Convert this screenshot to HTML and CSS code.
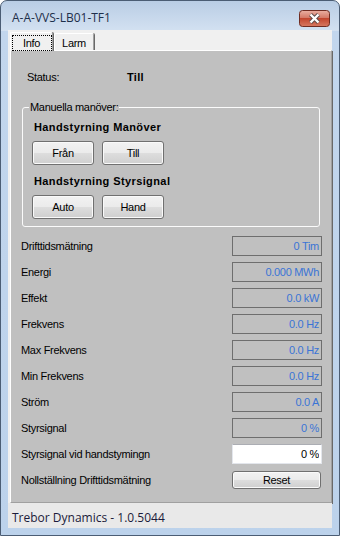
FILE: index.html
```html
<!DOCTYPE html>
<html lang="sv">
<head>
  <meta charset="UTF-8">
  <meta name="viewport" content="width=device-width, initial-scale=1.0">
  <title>A-A-VVS-LB01-TF1</title>
  <link rel="stylesheet" href="styles.css">
</head>
<body>
  <div class="window">
    <div class="titlebar">
      <span class="title">A-A-VVS-LB01-TF1</span>
      <span class="close-btn">
        <svg width="31" height="17" viewBox="0 0 31 17">
          <defs>
            <linearGradient id="closeGrad" x1="0" y1="0" x2="0" y2="1">
              <stop offset="0" stop-color="#eab0a3"/>
              <stop offset="0.45" stop-color="#d47a68"/>
              <stop offset="0.5" stop-color="#c2462f"/>
              <stop offset="1" stop-color="#d77a62"/>
            </linearGradient>
          </defs>
          <rect x="0.5" y="0.5" width="30" height="16" rx="3" fill="url(#closeGrad)" stroke="#6f2c22"/>
          <path d="M11.5 4.5 L19.5 12.5 M19.5 4.5 L11.5 12.5" stroke="#5a4a48" stroke-width="4.2"/>
          <path d="M11.5 4.5 L19.5 12.5 M19.5 4.5 L11.5 12.5" stroke="#ffffff" stroke-width="2.4"/>
        </svg>
      </span>
    </div>

    <div class="client">
      <div class="tabs">
        <div class="tab active"><span class="focus">Info</span></div>
        <div class="tab">Larm</div>
      </div>

      <div class="tabpage">
        <div class="status-row">
          <span class="status-label">Status:</span>
          <span class="status-value">Till</span>
        </div>

        <fieldset class="group">
          <legend>Manuella manöver:</legend>
          <div class="group-title">Handstyrning Manöver</div>
          <div class="btn-row">
            <button class="btn">Från</button>
            <button class="btn">Till</button>
          </div>
          <div class="group-title second">Handstyrning Styrsignal</div>
          <div class="btn-row">
            <button class="btn">Auto</button>
            <button class="btn">Hand</button>
          </div>
        </fieldset>

        <div class="rows">
          <div class="row"><span>Drifttidsmätning</span><span class="value">0 Tim</span></div>
          <div class="row"><span>Energi</span><span class="value">0.000 MWh</span></div>
          <div class="row"><span>Effekt</span><span class="value">0.0 kW</span></div>
          <div class="row"><span>Frekvens</span><span class="value">0.0 Hz</span></div>
          <div class="row"><span>Max Frekvens</span><span class="value">0.0 Hz</span></div>
          <div class="row"><span>Min Frekvens</span><span class="value">0.0 Hz</span></div>
          <div class="row"><span>Ström</span><span class="value">0.0 A</span></div>
          <div class="row"><span>Styrsignal</span><span class="value">0 %</span></div>
          <div class="row"><span>Styrsignal vid handstymingn</span><input class="input" type="text" value="0 %"></div>
          <div class="row"><span>Nollställning Drifttidsmätning</span><button class="btn reset">Reset</button></div>
        </div>
      </div>

      <div class="statusbar">Trebor Dynamics - 1.0.5044</div>
    </div>
  </div>
</body>
</html>
```

FILE: styles.css
```css
* {
  box-sizing: border-box;
}

body {
  margin: 0;
  background-color: #ffffff;
  font-family: "Liberation Sans", Arial, sans-serif;
  font-size: 11px;
  color: #000000;
}

.window {
  width: 340px;
  height: 536px;
  border: 1px solid #4b5d74;
  border-radius: 7px 7px 0 0;
  background: linear-gradient(#b9cde5 0, #d3e1f1 30px, #c2d6ed 30px, #bcd2eb 100%);
  padding: 0 7px 7px 7px;
  display: flex;
  flex-direction: column;
}

.titlebar {
  height: 29px;
  display: flex;
  justify-content: space-between;
  align-items: flex-start;
  padding-left: 4px;
}

.title {
  margin-top: 9px;
  font-family: "Open Sans", "Noto Sans", sans-serif;
  font-size: 12px;
  line-height: 16px;
  color: #1e2f4a;
}

.close-btn {
  display: block;
  width: 31px;
  height: 17px;
  margin-top: 9px;
  margin-right: 2px;
}

.close-btn svg {
  display: block;
}

.client {
  flex: 1;
  background-color: #f0f0f0;
  display: flex;
  flex-direction: column;
}

.tabs {
  height: 20px;
  display: flex;
  align-items: flex-end;
  padding-left: 2px;
}

.tab {
  height: 17px;
  width: 40px;
  display: flex;
  align-items: center;
  justify-content: center;
  border-top: 1px solid #ffffff;
  border-left: 1px solid #ffffff;
  border-right: 1px solid #a0a0a0;
  box-shadow: 1px 0 0 #696969;
  border-radius: 2px 2px 0 0;
  letter-spacing: -0.3px;
  padding-top: 1px;
}

.tab.active {
  height: 19px;
  width: 43px;
  margin-bottom: -1px;
  position: relative;
  background-color: #f0f0f0;
  margin-right: 1px;
}

.focus {
  display: flex;
  align-items: center;
  justify-content: center;
  width: 40px;
  height: 16px;
  border: 1px dotted #000000;
}

.tabpage {
  height: 453px;
  margin-left: 2px;
  width: 322px;
  background-color: #c0c0c0;
  border-top: 1px solid #ffffff;
  border-left: 1px solid #ffffff;
  border-right: 1px solid #a0a0a0;
  border-bottom: 1px solid #a0a0a0;
  box-shadow: 1px 1px 0 #696969;
  padding: 20px 9px 0 10px;
  letter-spacing: -0.3px;
}

.status-row {
  display: flex;
  height: 13px;
  line-height: 13px;
  padding-left: 6px;
}

.status-label {
  width: 100px;
}

.status-value {
  font-weight: bold;
  letter-spacing: 0.3px;
}

.group {
  margin: 17px 2px 0 1px;
  padding: 0 6px 7px 6px;
  border: 1px solid #fbfbfb;
  border-radius: 3px;
  min-width: 0;
}

.group legend {
  padding: 0 1px;
  line-height: 13px;
}

.group-title {
  margin-top: 7px;
  padding-left: 5px;
  font-weight: bold;
  letter-spacing: 0.4px;
  line-height: 13px;
}

.group-title.second {
  margin-top: 10px;
}

.btn-row {
  display: flex;
  gap: 8px;
  margin-top: 7px;
  padding-left: 3px;
}

.btn {
  width: 62px;
  height: 24px;
  padding: 0;
  border: 1px solid #707070;
  border-radius: 3px;
  background: linear-gradient(#f2f2f2 0%, #ebebeb 48%, #dddddd 52%, #cfcfcf 100%);
  box-shadow: inset 0 0 0 1px #fafafa;
  font-family: "Liberation Sans", Arial, sans-serif;
  font-size: 11px;
  letter-spacing: -0.3px;
  color: #000000;
}

.rows {
  margin-top: 9px;
  display: flex;
  flex-direction: column;
  gap: 6px;
}

.row {
  height: 20px;
  display: flex;
  justify-content: space-between;
  align-items: center;
}

.value {
  width: 90px;
  height: 20px;
  border: 1px solid #6e6e6e;
  text-align: right;
  padding-right: 2px;
  line-height: 18px;
  color: #3a74d6;
}

.input {
  width: 90px;
  height: 20px;
  border: 1px solid #e3e6ec;
  border-top-color: #abadb3;
  background-color: #ffffff;
  text-align: right;
  padding: 0 2px 0 0;
  font-family: "Liberation Sans", Arial, sans-serif;
  font-size: 11px;
  letter-spacing: -0.3px;
  color: #000000;
}

.btn.reset {
  width: 89px;
  height: 18px;
  margin-right: 1px;
}

.statusbar {
  flex: 1;
  background-color: #e9e9e9;
  padding: 6px 0 0 4px;
  font-family: "Open Sans", "Noto Sans", sans-serif;
  font-size: 12px;
  color: #1b1b3a;
}
```
